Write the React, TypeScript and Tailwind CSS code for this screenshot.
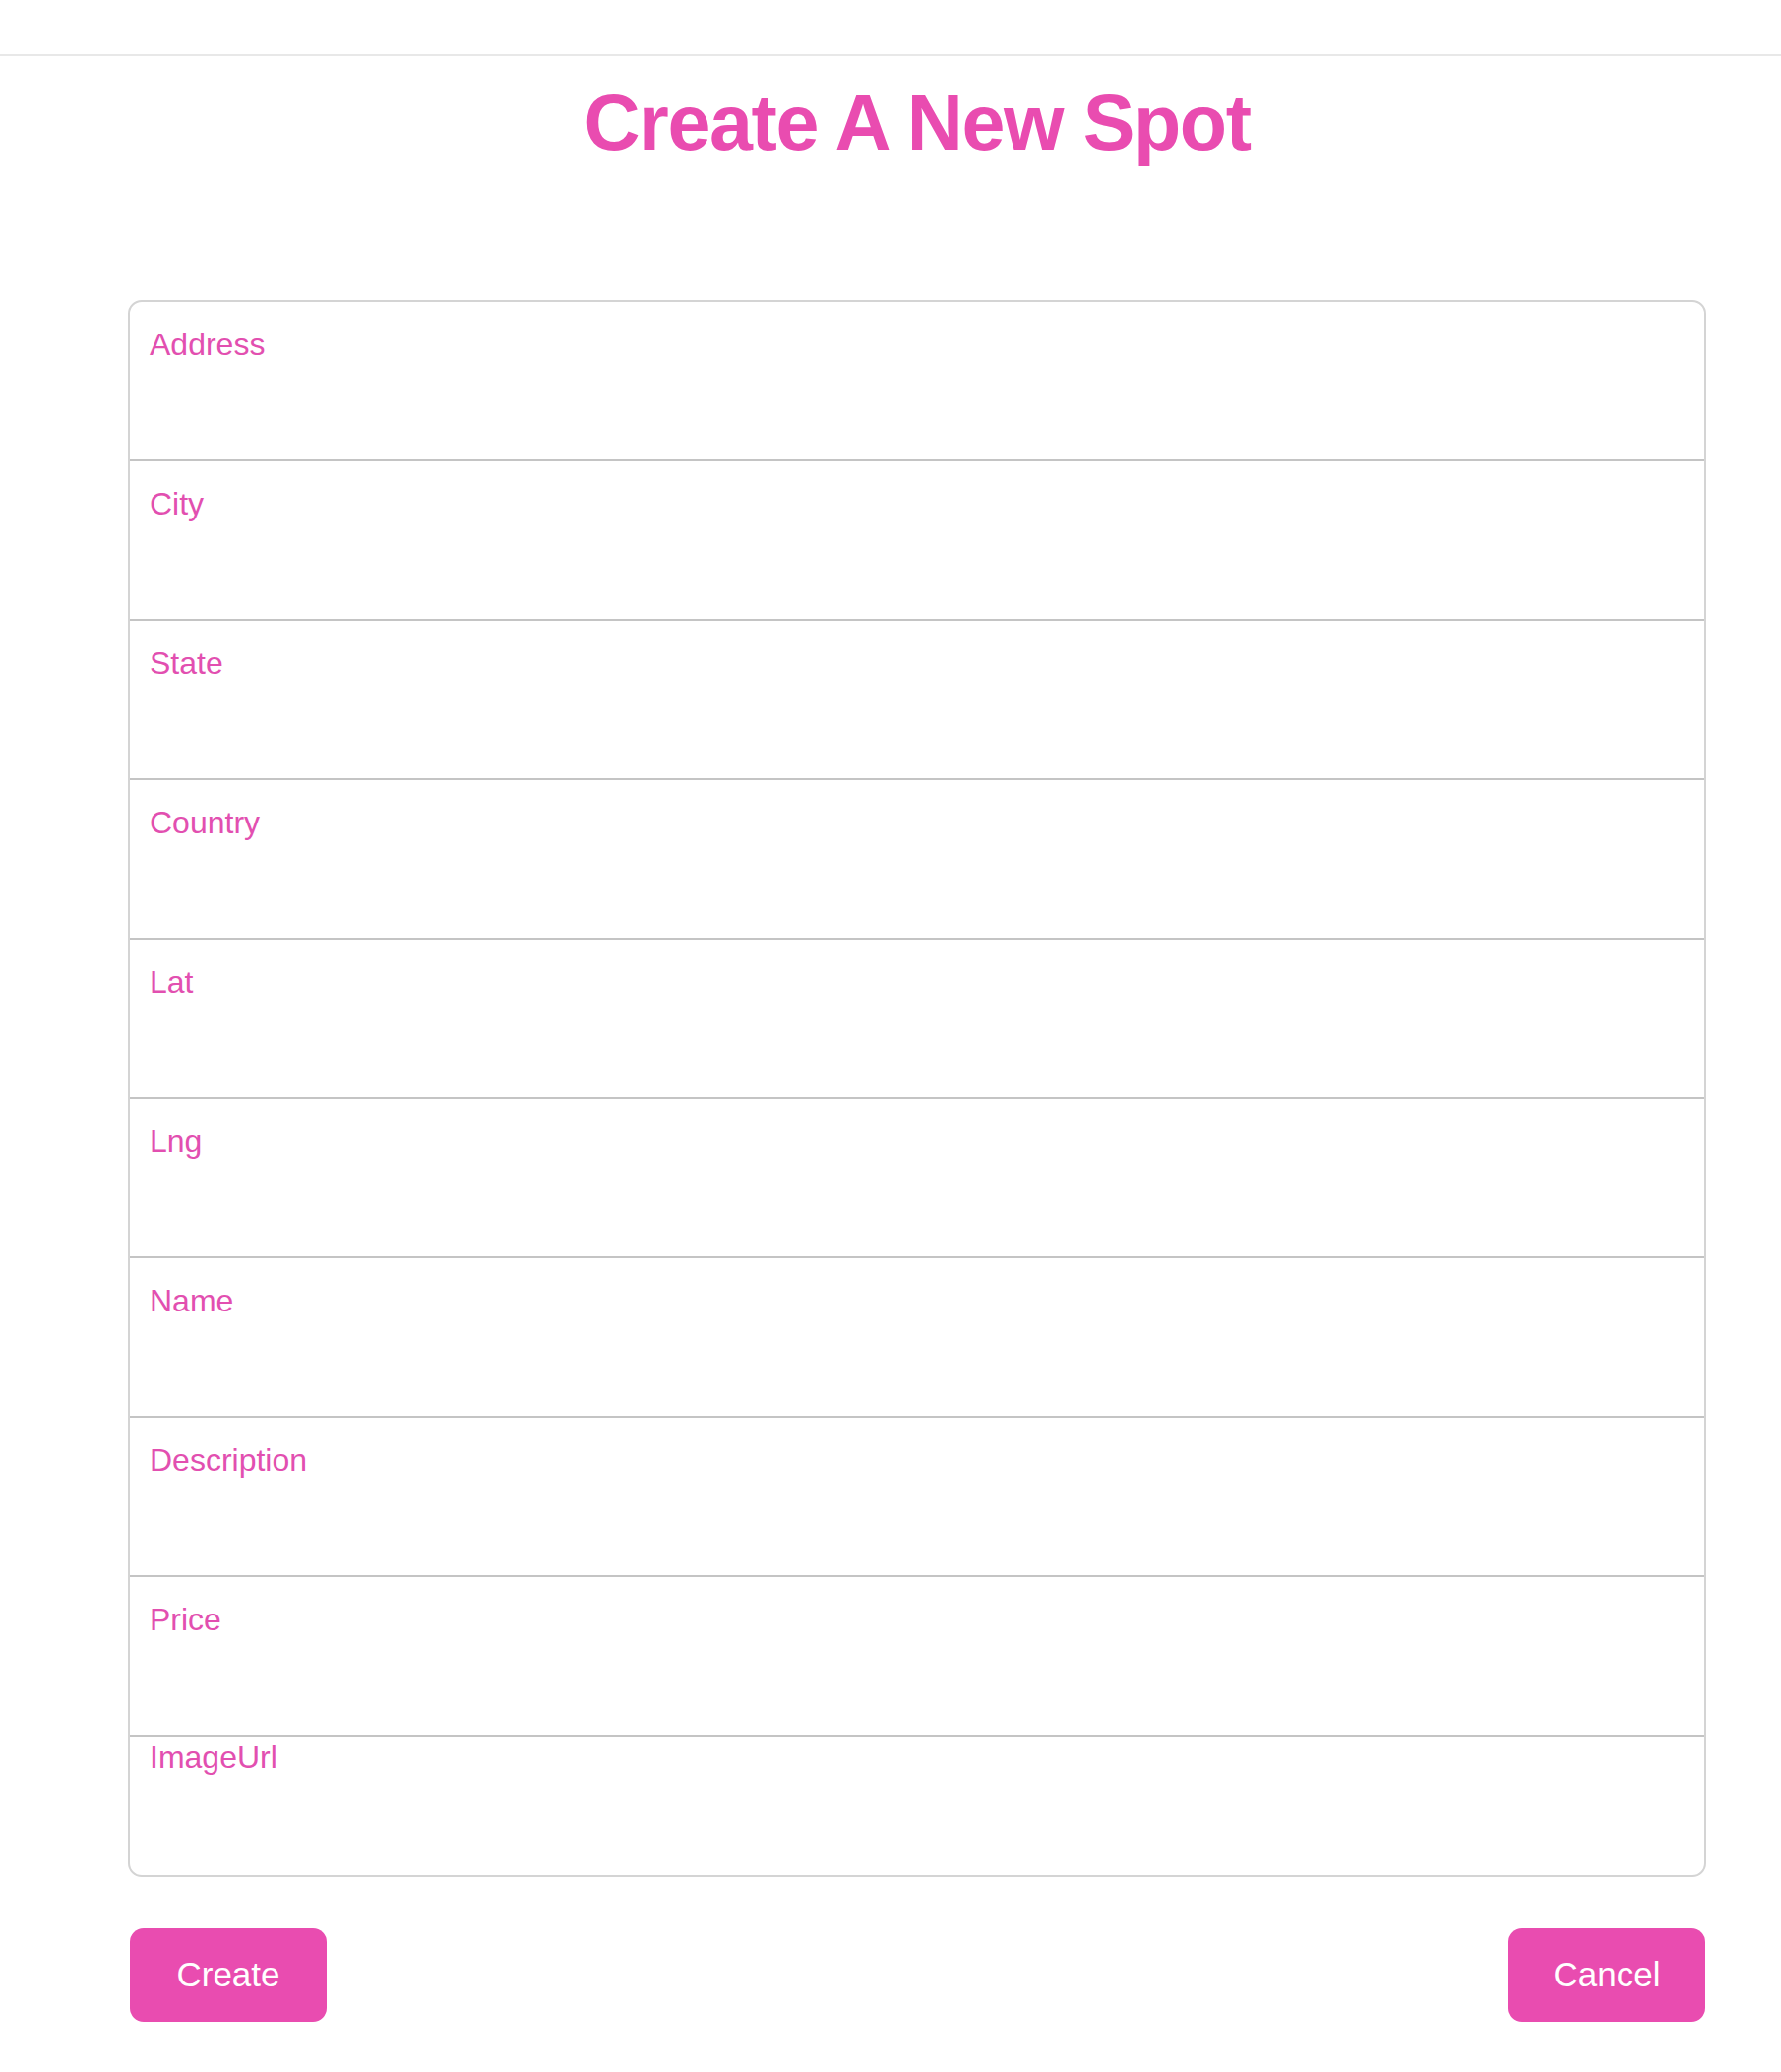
import React from "react";

const fields = ["Address", "City", "State", "Country", "Lat", "Lng", "Name", "Description", "Price"];

export default function App() {
  return (
    <main className="min-h-[2106px] bg-white font-['Liberation_Sans',Arial,sans-serif]">
      {/* Nav bar */}
      <div className="h-[57px] border-b-2 border-[#e8e8e8]" />

      <div className="ml-[130px] w-[1604px]">
        {/* Title */}
        <h1 className="mt-[23px] text-center text-[79px] leading-[90px] font-bold tracking-[-1.4px] text-[#e94cb0]">
          Create A New Spot
        </h1>

        {/* Form box */}
        <form className="mt-[135px] border-2 border-[#d4d4d4] rounded-[14px] overflow-hidden">
          {fields.map((f) => (
            <div key={f} className="h-[162px] border-b-2 border-[#c4c4c4] px-[20px] pt-[25px]">
              <label className="block text-[32px] leading-[37px] text-[#e24fb0]">{f}</label>
              <input className="mt-[8px] w-full h-[60px] bg-transparent outline-none" />
            </div>
          ))}
          <div className="h-[141px] px-[20px] pt-[3px]">
            <label className="block text-[32px] leading-[37px] text-[#e24fb0]">ImageUrl</label>
            <input className="mt-[8px] w-full h-[60px] bg-transparent outline-none" />
          </div>
        </form>

        {/* Buttons */}
        <div className="mt-[52px] flex justify-between">
          <button className="ml-[2px] w-[200px] h-[95px] rounded-[14px] bg-[#e94cb0] text-white text-[35px]">
            Create
          </button>
          <button className="mr-[1px] w-[200px] h-[95px] rounded-[14px] bg-[#e94cb0] text-white text-[35px]">
            Cancel
          </button>
        </div>
      </div>
    </main>
  );
}
